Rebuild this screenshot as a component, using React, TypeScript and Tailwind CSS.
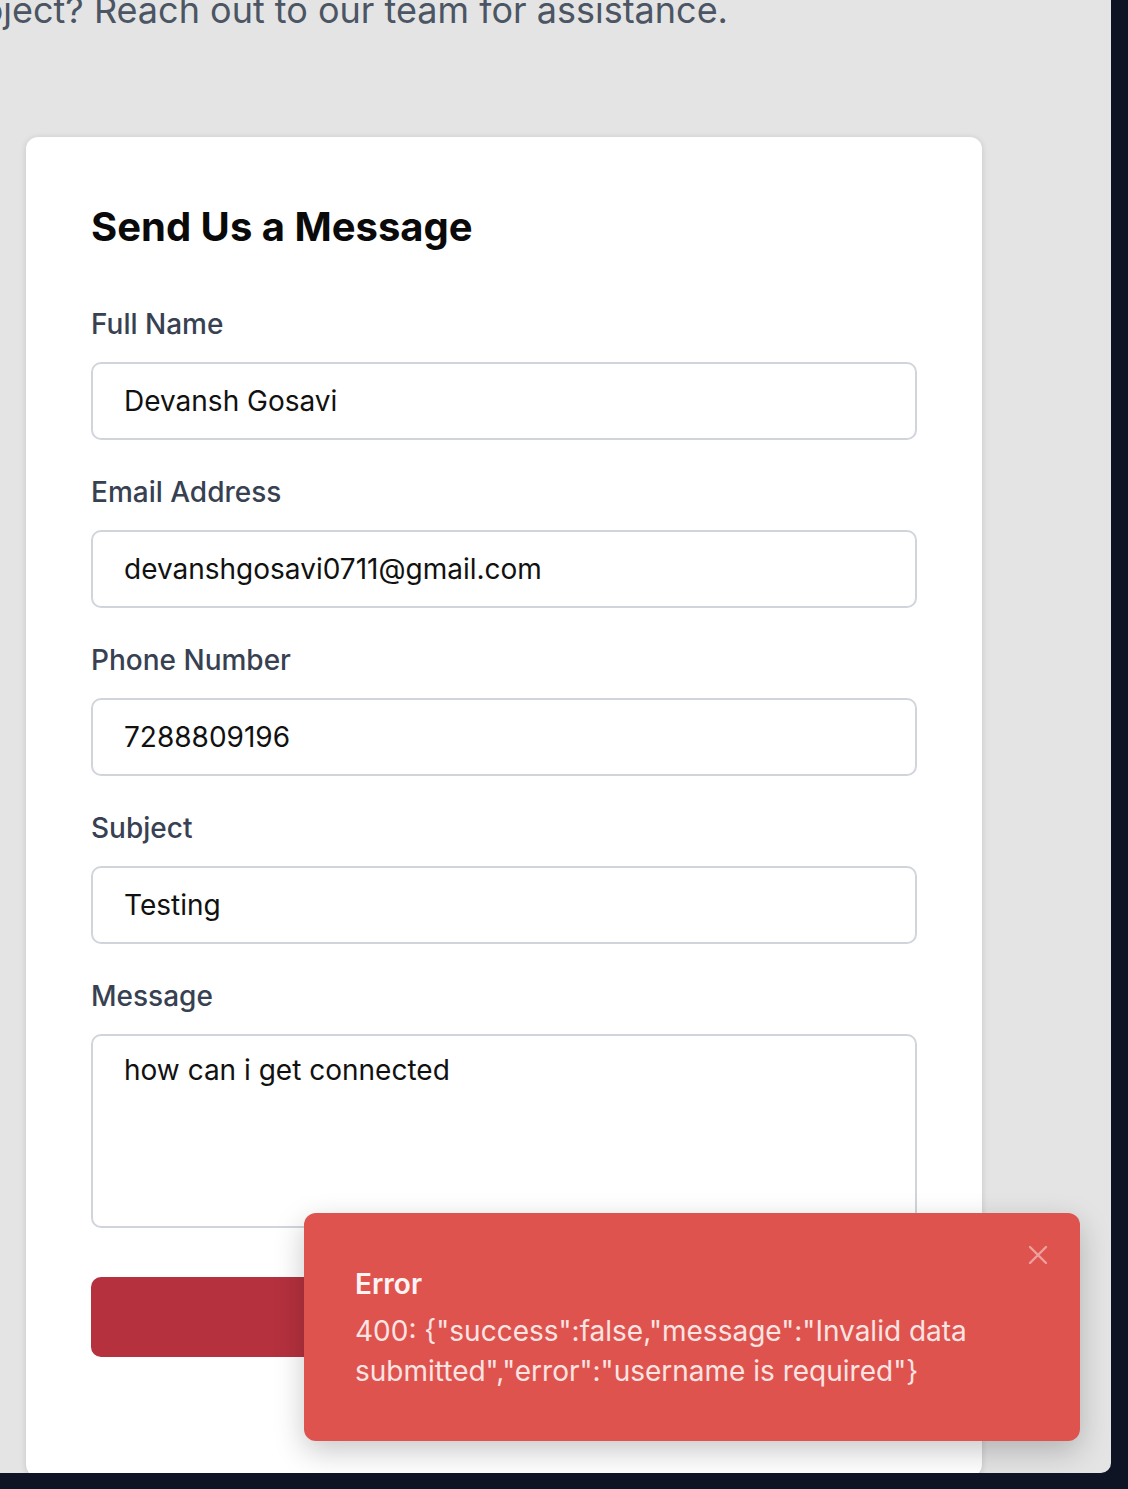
const fields = [
  { label: "Full Name", value: "Devansh Gosavi", type: "text" },
  { label: "Email Address", value: "devanshgosavi0711@gmail.com", type: "email" },
  { label: "Phone Number", value: "7288809196", type: "tel" },
  { label: "Subject", value: "Testing", type: "text" },
];

function Field({ label, value, type }: { label: string; value: string; type: string }) {
  return (
    <div className="flex flex-col">
      <label className="mb-[18px] text-[28px] font-medium leading-[40px] text-[#374151]">{label}</label>
      <input
        type={type}
        defaultValue={value}
        className="h-[78px] w-full rounded-[10px] border-2 border-[#d1d5db] bg-white px-[31px] font-['Inter',sans-serif] text-[28px] text-[#111111] outline-none"
      />
    </div>
  );
}

function Toast() {
  return (
    <div className="absolute left-[304px] top-[1213px] w-[776px] rounded-[12px] bg-[#df534e] pb-[50px] pl-[51px] pr-[90px] pt-[51px] shadow-[0_10px_30px_rgba(0,0,0,0.22)]">
      <button type="button" className="absolute right-[31px] top-[31px] text-white/45">
        <svg width="22" height="22" viewBox="0 0 22 22" fill="none" stroke="currentColor" strokeWidth="2.4" strokeLinecap="round">
          <path d="M3 3l16 16M19 3L3 19" />
        </svg>
      </button>
      <p className="text-[28px] font-semibold leading-[40px] text-[#fff4f3]">Error</p>
      <p className="mt-[7px] text-[28px] leading-[40px] text-[#fbe4e2]">
        400: {'{"success":false,"message":"Invalid data submitted","error":"username is required"}'}
      </p>
    </div>
  );
}

export default function App() {
  return (
    <div className="h-[1489px] w-[1128px] overflow-hidden bg-[#0f1424] font-['Inter',sans-serif]">
      <div className="relative h-[1473px] w-[1111px] overflow-hidden rounded-br-[10px] bg-[#e4e4e4]">
        <div className="-mt-[12px] flex w-[728px] justify-end whitespace-nowrap">
          <p className="text-[36px] leading-[44px] text-[#4b5563]">
            Have questions about our project? Reach out to our team for assistance.
          </p>
        </div>

        <div className="ml-[26px] mt-[105px] w-[956px] rounded-[12px] bg-white px-[65px] pb-[120px] pt-[65px] shadow-[0_1px_6px_rgba(0,0,0,0.14)]">
          <h2 className="text-[40px] font-bold leading-[50px] text-[#0a0a0a]">Send Us a Message</h2>

          <form className="mt-[52px] flex flex-col gap-[32px]">
            {fields.map((f) => (
              <Field key={f.label} {...f} />
            ))}
            <div className="flex flex-col">
              <label className="mb-[18px] text-[28px] font-medium leading-[40px] text-[#374151]">Message</label>
              <textarea
                defaultValue="how can i get connected"
                className="h-[194px] w-full rounded-[10px] border-2 border-[#d1d5db] bg-white px-[31px] py-[14px] font-['Inter',sans-serif] text-[28px] leading-[40px] text-[#111111] outline-none"
              />
            </div>
            <button
              type="button"
              className="mt-[17px] h-[80px] w-full rounded-[10px] bg-[#b5313e] text-[28px] font-semibold text-white"
            >
              Send Message
            </button>
          </form>
        </div>

        <Toast />
      </div>
    </div>
  );
}
